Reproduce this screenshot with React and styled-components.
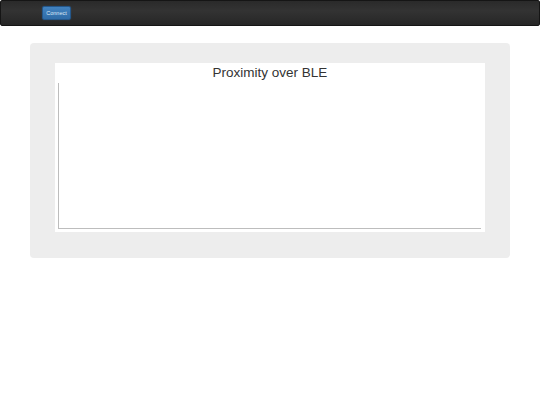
import { createGlobalStyle, styled } from "styled-components";

const GlobalStyle = createGlobalStyle`
  body {
    margin: 0;
    background: #fff;
    font-family: "Liberation Sans", Arial, sans-serif;
  }
`;

export default function App() {
  return (
    <>
      <GlobalStyle />
      <NavBar>
        <ConnectButton>Connect</ConnectButton>
      </NavBar>
      <Container>
        <Jumbotron>
          <ChartPanel>
            <ChartTitle>Proximity over BLE</ChartTitle>
            <PlotArea width="430" height="149" viewBox="0 0 430 149">
              <line x1="3.5" y1="0" x2="3.5" y2="146" stroke="#bdbdbd" strokeWidth="1" />
              <line x1="3" y1="145.5" x2="426" y2="145.5" stroke="#bdbdbd" strokeWidth="1" />
            </PlotArea>
          </ChartPanel>
        </Jumbotron>
      </Container>
    </>
  );
}

const NavBar = styled.div`
  box-sizing: border-box;
  height: 26px;
  display: flex;
  align-items: center;
  padding-left: 41px;
  background: linear-gradient(to bottom, #2a2a2a, #333 40%, #262626);
  border: 1px solid #151515;
  border-radius: 2px;
`;

const ConnectButton = styled.button`
  box-sizing: border-box;
  width: 29px;
  height: 14px;
  padding: 0;
  font-family: "Liberation Sans", Arial, sans-serif;
  font-size: 5.5px;
  color: #dde8f3;
  background: linear-gradient(to bottom, #4282bf, #306ca7);
  border: 1px solid #24578a;
  border-radius: 2px;
  box-shadow: 0 0 1px rgba(80, 140, 200, 0.5);
`;

const Container = styled.div`
  padding: 17px 30px 0;
`;

const Jumbotron = styled.div`
  box-sizing: border-box;
  width: 480px;
  padding: 20px 25px 26px;
  background: #ededed;
  border-radius: 4px;
`;

const ChartPanel = styled.div`
  background: #fff;
  height: 169px;
  display: flex;
  flex-direction: column;
`;

const ChartTitle = styled.div`
  height: 20px;
  line-height: 19px;
  text-align: center;
  font-size: 13.5px;
  color: #333;
`;

const PlotArea = styled.svg`
  display: block;
`;
